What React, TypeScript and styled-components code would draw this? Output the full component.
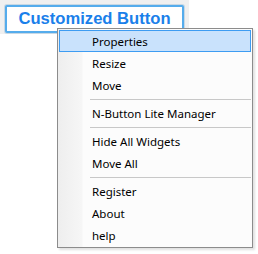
import React from "react";
import styled, { createGlobalStyle } from "styled-components";

const Global = createGlobalStyle`
  html, body { margin: 0; padding: 0; background: #ffffff; }
  body { width: 258px; height: 254px; overflow: hidden; position: relative; }
`;

const Stage = styled.div`
  position: relative;
  width: 258px;
  height: 254px;
`;

const ButtonArea = styled.div`
  width: 189px;
  height: 34px;
  background: #f0f0f0;
  padding: 5px 0 0 5px;
  box-sizing: border-box;
`;

const CustomButton = styled.div`
  width: 179px;
  height: 28px;
  box-sizing: border-box;
  border: 2px solid #55acec;
  border-radius: 2px;
  background: #ffffff;
  box-shadow: 0 0 0 1px #c8d8e4;
  display: flex;
  align-items: center;
  justify-content: center;
  font-family: "Liberation Sans", Arial, sans-serif;
  font-weight: bold;
  font-size: 16.6px;
  color: #1a80ea;
`;

const Menu = styled.div`
  position: absolute;
  left: 57px;
  top: 28px;
  width: 196px;
  height: 220px;
  box-sizing: border-box;
  border: 1px solid #8c8c8c;
  padding: 1px 0 1px 1px;
  background: linear-gradient(
    to right,
    #eeeeee 0px,
    #f6f6f6 24px,
    #fcfcfc 25px,
    #fcfcfc 100%
  );
  box-shadow: 2px 2px 2px rgba(0, 0, 0, 0.12);
  display: flex;
  flex-direction: column;
`;

const Item = styled.div<{ $active?: boolean }>`
  height: 22px;
  box-sizing: border-box;
  display: flex;
  align-items: center;
  padding-left: 32px;
  font-family: "Noto Sans", "Open Sans", sans-serif;
  font-size: 11.5px;
  color: #000000;
  border: 1px solid ${(p) => (p.$active ? "#3d9cf2" : "transparent")};
  background: ${(p) => (p.$active ? "#c9e2fc" : "transparent")};
  margin-right: 1px;
`;

const Separator = styled.div`
  height: 6px;
  display: flex;
  align-items: center;
  padding-left: 31px;
  &::after {
    content: "";
    flex: 1;
    height: 1px;
    margin-right: 1px;
    background: #c8c8c8;
  }
`;

type Entry = { label?: string; active?: boolean; sep?: boolean };

const entries: Entry[] = [
  { label: "Properties", active: true },
  { label: "Resize" },
  { label: "Move" },
  { sep: true },
  { label: "N-Button Lite Manager" },
  { sep: true },
  { label: "Hide All Widgets" },
  { label: "Move All" },
  { sep: true },
  { label: "Register" },
  { label: "About" },
  { label: "help" },
];

export default function App() {
  return (
    <Stage>
      <Global />
      <ButtonArea>
        <CustomButton>Customized Button</CustomButton>
      </ButtonArea>
      <Menu>
        {entries.map((e, i) =>
          e.sep ? (
            <Separator key={i} />
          ) : (
            <Item key={i} $active={e.active}>
              {e.label}
            </Item>
          )
        )}
      </Menu>
    </Stage>
  );
}
